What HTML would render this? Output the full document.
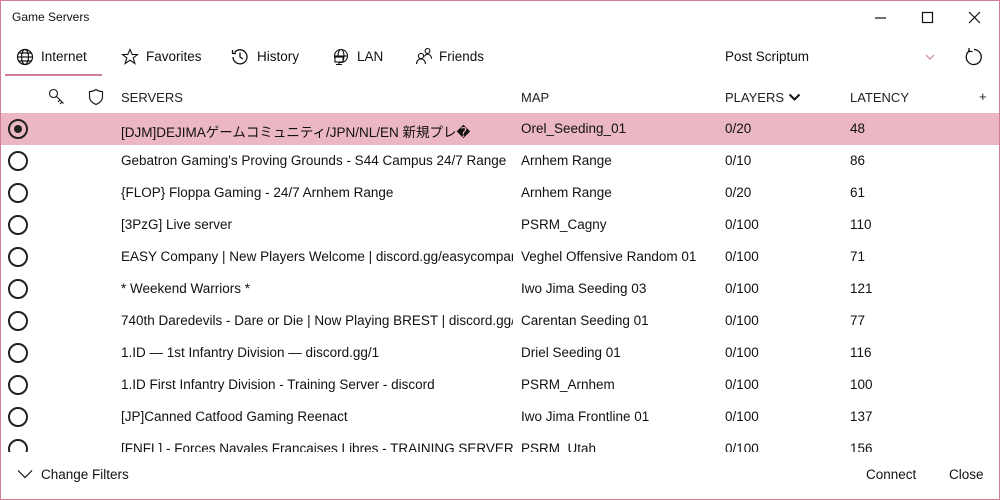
<!DOCTYPE html>
<html><head><meta charset="utf-8"><style>
*{margin:0;padding:0;box-sizing:border-box}
body{width:1000px;height:500px;overflow:hidden;background:#fff;font-family:"Liberation Sans","Noto Sans CJK JP",sans-serif;color:#111;font-size:13.5px}
.win{position:absolute;left:0;top:0;width:1000px;height:500px}
.bd{position:absolute;left:0;top:0;width:1000px;height:500px;border:1px solid #d27e96;pointer-events:none}
.a{position:absolute;white-space:nowrap}
.row{position:absolute;left:0;width:998px;height:32px}
.row span{position:absolute;top:8px;white-space:nowrap;overflow:hidden}
.sel{background:#ebb7c2}
.rad{position:absolute;left:7px;top:6px;width:20px;height:20px;border:2px solid #222;border-radius:50%}
.rad i{position:absolute;left:4px;top:4px;width:8px;height:8px;background:#222;border-radius:50%}
.hd{font-size:13px;color:#222}
</style></head><body><div class="win">
<div class="a" style="left:12px;top:10px;font-size:12px">Game Servers</div>
<svg class="a" style="left:870px;top:10px" width="120" height="16" stroke="#111" fill="none" stroke-width="1.2">
<line x1="5" y1="8" x2="16" y2="8"/><rect x="52.5" y="2.5" width="10" height="10"/><path d="M99 2L110 13M110 2L99 13"/></svg>
<svg class="a" style="left:16px;top:48px" width="18" height="18" fill="none" stroke="#111" stroke-width="1.2"><circle cx="9" cy="9" r="7.5"/><ellipse cx="9" cy="9" rx="3.5" ry="7.5"/><line x1="1.5" y1="9" x2="16.5" y2="9"/><path d="M3 5h12M3 13h12"/></svg>
<div class="a" style="left:41px;top:49px">Internet</div>
<div class="a" style="left:5px;top:74px;width:97px;height:2px;background:#d27e96"></div>
<svg class="a" style="left:121px;top:48px" width="18" height="18" fill="none" stroke="#111" stroke-width="1.1"><path d="M9 1.5l2.2 5h5.3l-4.3 3.4 1.7 5.6L9 12.2l-4.9 3.3 1.7-5.6L1.5 6.5h5.3z"/></svg>
<div class="a" style="left:146px;top:49px">Favorites</div>
<svg class="a" style="left:231px;top:48px" width="18" height="18" fill="none" stroke="#111" stroke-width="1.3"><path d="M3.5 4.5A7 7 0 1 1 2 9"/><path d="M1.5 2v3.5h3.5"/><path d="M9 4.5V9l3 2"/></svg>
<div class="a" style="left:257px;top:49px">History</div>
<svg class="a" style="left:332px;top:48px" width="18" height="18" fill="none" stroke="#111" stroke-width="1.1"><circle cx="9" cy="8" r="6.5"/><ellipse cx="9" cy="8" rx="3" ry="6.5"/><line x1="2.5" y1="8" x2="15.5" y2="8"/><rect x="3" y="9" width="8" height="5" fill="#fff"/><path d="M7 14v2M4 16.5h6"/></svg>
<div class="a" style="left:357px;top:49px">LAN</div>
<svg class="a" style="left:415px;top:47px" width="18" height="18" fill="none" stroke="#111" stroke-width="1.1"><circle cx="6" cy="9" r="2.6"/><path d="M1.5 17c0-3 2-5 4.5-5s4.5 2 4.5 5"/><circle cx="12.5" cy="4" r="2.4"/><path d="M9.5 9.5c.7-1.5 1.8-2.3 3-2.3 2.2 0 4 1.8 4 4.5"/></svg>
<div class="a" style="left:439px;top:49px">Friends</div>
<div class="a" style="left:725px;top:49px">Post Scriptum</div>
<svg class="a" style="left:925px;top:54px" width="10" height="6" fill="none" stroke="#d27e96" stroke-width="1.2"><path d="M1 1l4 4 4-4"/></svg>
<svg class="a" style="left:964px;top:47px" width="20" height="20" fill="none" stroke="#111" stroke-width="1.3"><path d="M6 3.5A7.5 7.5 0 1 0 10 2.5"/><path d="M5 1v3.5h3.5" /></svg>
<svg class="a" style="left:48px;top:88px" width="18" height="18" fill="none" stroke="#111" stroke-width="1.1"><circle cx="5.5" cy="5.5" r="4"/><path d="M8.5 8.5l7 7M12 12l-2 2M14 14l-2 2"/></svg>
<svg class="a" style="left:88px;top:88px" width="16" height="18" fill="none" stroke="#111" stroke-width="1.1"><path d="M8 1.5C6 3 4 3.5 1.5 3.5v5c0 4 3 6.5 6.5 8 3.5-1.5 6.5-4 6.5-8v-5C12 3.5 10 3 8 1.5z"/></svg>
<div class="a hd" style="left:121px;top:90px">SERVERS</div>
<div class="a hd" style="left:521px;top:90px">MAP</div>
<div class="a hd" style="left:725px;top:90px">PLAYERS</div>
<svg class="a" style="left:788px;top:93px" width="13" height="8" fill="none" stroke="#111" stroke-width="2"><path d="M1.5 1.5l5 5 5-5"/></svg>
<div class="a hd" style="left:850px;top:90px">LATENCY</div>
<div class="a hd" style="left:979px;top:89px">+</div>
<div class="a" style="left:1px;top:113px;width:998px;height:339px;overflow:hidden">
<div class="row sel" style="top:0"><div class="rad"><i></i></div><span style="left:120px">[DJM]DEJIMAゲームコミュニティ/JPN/NL/EN 新規プレ�</span><span style="left:520px">Orel_Seeding_01</span><span style="left:724px">0/20</span><span style="left:849px">48</span></div>
<div class="row" style="top:32px"><div class="rad"></div><span style="left:120px;width:392px">Gebatron Gaming's Proving Grounds - S44 Campus 24/7 Range</span><span style="left:520px">Arnhem Range</span><span style="left:724px">0/10</span><span style="left:849px">86</span></div>
<div class="row" style="top:64px"><div class="rad"></div><span style="left:120px">{FLOP} Floppa Gaming - 24/7 Arnhem Range</span><span style="left:520px">Arnhem Range</span><span style="left:724px">0/20</span><span style="left:849px">61</span></div>
<div class="row" style="top:96px"><div class="rad"></div><span style="left:120px">[3PzG] Live server</span><span style="left:520px">PSRM_Cagny</span><span style="left:724px">0/100</span><span style="left:849px">110</span></div>
<div class="row" style="top:128px"><div class="rad"></div><span style="left:120px;width:392px">EASY Company | New Players Welcome | discord.gg/easycompany</span><span style="left:520px">Veghel Offensive Random 01</span><span style="left:724px">0/100</span><span style="left:849px">71</span></div>
<div class="row" style="top:160px"><div class="rad"></div><span style="left:120px">* Weekend Warriors *</span><span style="left:520px">Iwo Jima Seeding 03</span><span style="left:724px">0/100</span><span style="left:849px">121</span></div>
<div class="row" style="top:192px"><div class="rad"></div><span style="left:120px;width:392px">740th Daredevils - Dare or Die | Now Playing BREST | discord.gg/740</span><span style="left:520px">Carentan Seeding 01</span><span style="left:724px">0/100</span><span style="left:849px">77</span></div>
<div class="row" style="top:224px"><div class="rad"></div><span style="left:120px">1.ID — 1st Infantry Division — discord.gg/1</span><span style="left:520px">Driel Seeding 01</span><span style="left:724px">0/100</span><span style="left:849px">116</span></div>
<div class="row" style="top:256px"><div class="rad"></div><span style="left:120px">1.ID First Infantry Division - Training Server - discord</span><span style="left:520px">PSRM_Arnhem</span><span style="left:724px">0/100</span><span style="left:849px">100</span></div>
<div class="row" style="top:288px"><div class="rad"></div><span style="left:120px">[JP]Canned Catfood Gaming Reenact</span><span style="left:520px">Iwo Jima Frontline 01</span><span style="left:724px">0/100</span><span style="left:849px">137</span></div>
<div class="row" style="top:320px"><div class="rad"></div><span style="left:120px;width:392px">[FNFL] - Forces Navales Francaises Libres - TRAINING SERVER - FR</span><span style="left:520px">PSRM_Utah</span><span style="left:724px">0/100</span><span style="left:849px">156</span></div>
</div>
<svg class="a" style="left:17px;top:469px" width="16" height="10" fill="none" stroke="#111" stroke-width="1.2"><path d="M1 1.5l7 7 7-7"/></svg>
<div class="a" style="left:41px;top:467px">Change Filters</div>
<div class="a" style="left:866px;top:467px">Connect</div>
<div class="a" style="left:949px;top:467px">Close</div>
</div><div class="bd"></div></body></html>
